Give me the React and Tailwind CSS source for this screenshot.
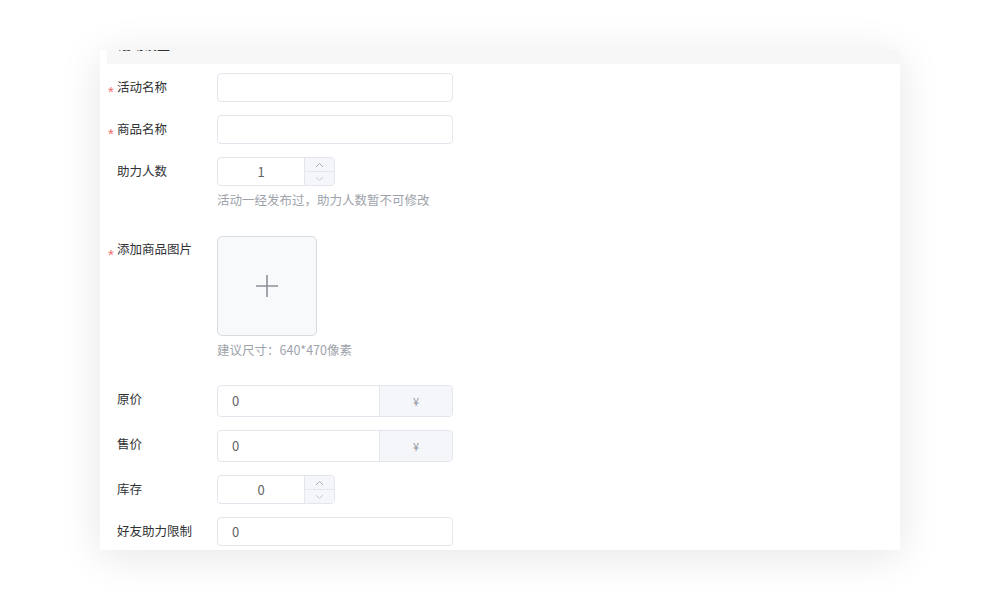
import React from "react";

const font = { fontFamily: '"PingFang SC","Noto Sans CJK SC","Liberation Sans",sans-serif' };

function Label({ req, children, className = "" }) {
  return (
    <div className={"w-[117px] shrink-0 flex items-center text-[12.5px] text-[#303133] " + className}>
      <span className="w-[9px] pl-[8px] box-content text-[#f56c6c] text-[15px] mt-[7px] leading-none" style={{ fontFamily: '"Liberation Sans",sans-serif' }}>{req ? "*" : ""}</span>
      <span>{children}</span>
    </div>
  );
}

function Stepper({ value }) {
  return (
    <div className="flex w-[118px] h-[29px] border border-[#e4e6ed] rounded-[4px] overflow-hidden bg-white">
      <div className="flex-1 flex items-center justify-center text-[13px] text-[#606266]">{value}</div>
      <div className="w-[30px] border-l border-[#e4e6ed] flex flex-col bg-[#f5f6fa]">
        <div className="flex-1 flex items-center justify-center border-b border-[#e4e6ed]">
          <svg width="9" height="6" viewBox="0 0 9 6"><path d="M1 5L4.5 1.5L8 5" fill="none" stroke="#a8abb2" strokeWidth="1" /></svg>
        </div>
        <div className="flex-1 flex items-center justify-center">
          <svg width="9" height="6" viewBox="0 0 9 6"><path d="M1 1L4.5 4.5L8 1" fill="none" stroke="#c8cbd2" strokeWidth="1" /></svg>
        </div>
      </div>
    </div>
  );
}

function Input({ value = "", h = "h-[29px]" }) {
  return (
    <div className={"w-[236px] border border-[#e4e6ed] rounded-[4px] bg-white flex items-center pl-[14px] text-[13px] text-[#606266] " + h}>
      {value}
    </div>
  );
}

function Price() {
  return (
    <div className="flex w-[236px] h-[32px] border border-[#e4e6ed] rounded-[4px] overflow-hidden bg-white">
      <div className="flex-1 flex items-center pl-[14px] text-[13px] text-[#606266]">0</div>
      <div className="w-[73px] border-l border-[#e4e6ed] bg-[#f5f6fa] flex items-center justify-center text-[11px] text-[#909399]">¥</div>
    </div>
  );
}

export default function App() {
  return (
    <div className="w-[1000px] h-[600px] bg-white pt-[50px] pl-[100px]" style={font}>
      <div className="w-[800px] h-[500px] bg-white overflow-hidden shadow-[0_6px_40px_rgba(0,0,0,0.10)]">
        <div className="ml-[7px] mt-[-26px] h-[40px] bg-[#f7f7f8] flex items-center pl-[11px] text-[13px] font-bold text-[#303133]">活动设置</div>
        <div className="flex flex-col pt-[9px]">
          <div className="flex items-center h-[29px]">
            <Label req>活动名称</Label>
            <Input />
          </div>
          <div className="flex items-center h-[29px] mt-[13px]">
            <Label req>商品名称</Label>
            <Input />
          </div>
          <div className="flex items-center h-[29px] mt-[13px]">
            <Label>助力人数</Label>
            <Stepper value="1" />
          </div>
          <div className="pl-[117px] mt-[4px] text-[12.5px] text-[#9ea3ab] leading-[20px]">活动一经发布过，助力人数暂不可修改</div>
          <div className="flex mt-[26px]">
            <Label req className="h-[28px] items-start pt-[4px]">添加商品图片</Label>
            <div className="w-[100px] h-[100px] rounded-[5px] border border-[#d9dce3] bg-[#f8f9fb] flex items-center justify-center">
              <svg width="24" height="24" viewBox="0 0 24 24"><path d="M12 1V23M1 12H23" stroke="#8c9099" strokeWidth="1.6" /></svg>
            </div>
          </div>
          <div className="pl-[117px] mt-[4px] text-[12.5px] text-[#9ea3ab] leading-[20px]">建议尺寸：640*470像素</div>
          <div className="flex items-center h-[32px] mt-[25px]">
            <Label className="-mt-[3px]">原价</Label>
            <Price />
          </div>
          <div className="flex items-center h-[32px] mt-[13px]">
            <Label className="-mt-[3px]">售价</Label>
            <Price />
          </div>
          <div className="flex items-center h-[29px] mt-[13px]">
            <Label>库存</Label>
            <Stepper value="0" />
          </div>
          <div className="flex items-center h-[29px] mt-[13px]">
            <Label>好友助力限制</Label>
            <Input value="0" />
          </div>
        </div>
      </div>
    </div>
  );
}
